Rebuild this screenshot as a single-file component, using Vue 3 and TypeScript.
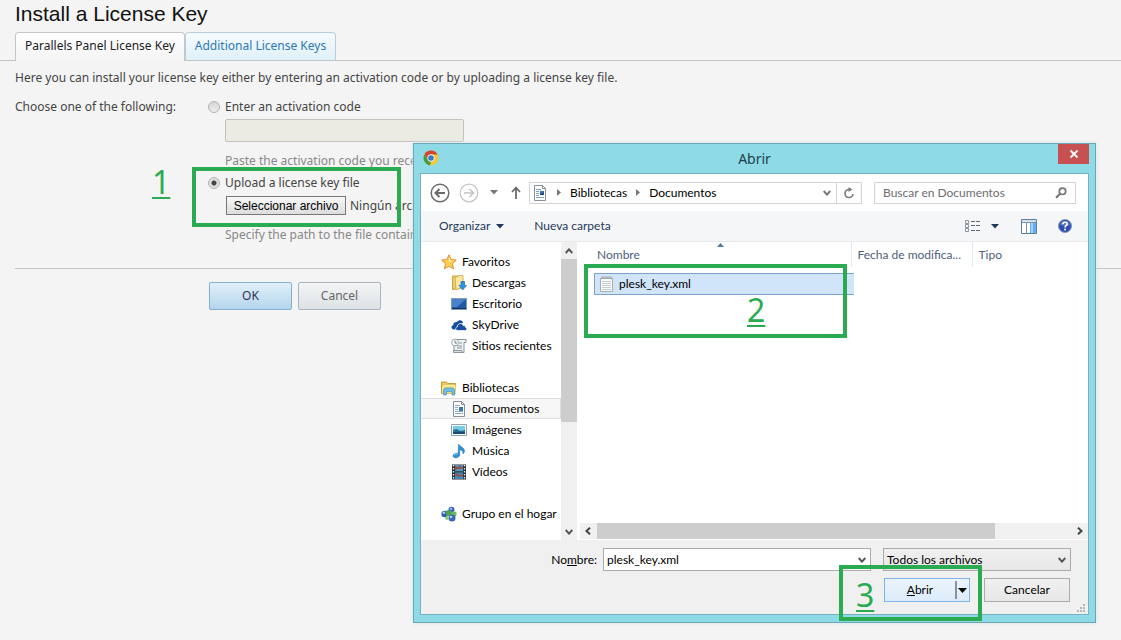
<script setup lang="ts">
import { ref } from 'vue'

interface TreeItem {
  label: string
  icon: string
  root?: boolean
  selected?: boolean
}

const groups: TreeItem[][] = [
  [
    { label: 'Favoritos', icon: 'star', root: true },
    { label: 'Descargas', icon: 'downloads' },
    { label: 'Escritorio', icon: 'desktop' },
    { label: 'SkyDrive', icon: 'cloud' },
    { label: 'Sitios recientes', icon: 'recent' },
  ],
  [
    { label: 'Bibliotecas', icon: 'libraries', root: true },
    { label: 'Documentos', icon: 'document', selected: true },
    { label: 'Imágenes', icon: 'picture' },
    { label: 'Música', icon: 'music' },
    { label: 'Vídeos', icon: 'video' },
  ],
  [{ label: 'Grupo en el hogar', icon: 'homegroup', root: true }],
]

const method = ref<string>('file')
const code = ref<string>('')
const query = ref<string>('')
const fileName = ref<string>('plesk_key.xml')
</script>

<template>
  <main class="page">
    <h1>Install a License Key</h1>
    <nav class="tabs">
      <a class="tab active" href="#panel">Parallels Panel License Key</a>
      <a class="tab" href="#additional">Additional License Keys</a>
    </nav>
    <p class="intro">Here you can install your license key either by entering an activation code or by uploading a license key file.</p>

    <form class="form" @submit.prevent>
      <div class="fields">
        <span class="prompt">Choose one of the following:</span>
        <div class="options">
          <label class="choice"><input v-model="method" type="radio" name="method" value="code" /><span>Enter an activation code</span></label>
          <input v-model="code" class="code" type="text" aria-label="Activation code" :disabled="method !== 'code'" />
          <p class="hint">Paste the activation code you received</p>
          <div class="upload">
            <label class="choice"><input v-model="method" type="radio" name="method" value="file" /><span>Upload a license key file</span></label>
            <div class="file">
              <button type="button">Seleccionar archivo</button>
              <span>Ningún archivo</span>
            </div>
            <div class="mark mark-one"><u>1</u></div>
          </div>
          <p class="hint last">Specify the path to the file containing</p>
        </div>
      </div>
      <div class="actions">
        <button class="ok" type="submit">OK</button>
        <button class="cancel" type="button">Cancel</button>
      </div>
    </form>

    <section class="dialog" role="dialog" aria-labelledby="dialog-title">
      <header class="titlebar">
        <svg class="chrome" viewBox="0 0 16 16" width="16" height="16">
          <circle cx="8" cy="8" r="7.5" fill="#f3c934" />
          <path d="M1.5 4.3A7.5 7.5 0 0 1 14.6 4.5H8L5 9.8z" fill="#d8402f" />
          <path d="M1.5 4.3L5 9.8L8 11.5L7 15.4A7.5 7.5 0 0 1 1.5 4.3z" fill="#3f9e49" />
          <circle cx="8" cy="8" r="3.7" fill="#f4f4ee" />
          <circle cx="8" cy="8" r="2.8" fill="#3c79cb" />
        </svg>
        <h2 id="dialog-title">Abrir</h2>
        <button class="close" type="button" aria-label="Cerrar">
          <svg viewBox="0 0 10 10" width="10" height="10"><path d="M1.5 1.5l7 7M8.5 1.5l-7 7" stroke="#fff" stroke-width="1.8" /></svg>
        </button>
      </header>

      <div class="client">
        <div class="address">
          <button class="icon-btn" type="button" aria-label="Atrás">
            <svg viewBox="0 0 20 20" width="20" height="20" fill="none" stroke="#6b6b6b"><circle cx="10" cy="10" r="8.8" stroke-width="1.5" /><path d="M15 10H6M9.5 6L5.5 10l4 4" stroke-width="2" /></svg>
          </button>
          <button class="icon-btn forward" type="button" aria-label="Adelante">
            <svg viewBox="0 0 20 20" width="20" height="20" fill="none" stroke="#c4c4c4"><circle cx="10" cy="10" r="8.8" stroke-width="1.2" /><path d="M5 10h9M10.5 6l4 4-4 4" stroke-width="1.6" /></svg>
          </button>
          <button class="icon-btn history" type="button" aria-label="Ubicaciones recientes">
            <svg viewBox="0 0 8 5" width="8" height="5"><path d="M0 0h8L4 4.6z" fill="#777" /></svg>
          </button>
          <button class="icon-btn up" type="button" aria-label="Subir">
            <svg viewBox="0 0 10 14" width="10" height="14" fill="none" stroke="#6b6b6b" stroke-width="1.8"><path d="M5 13V2M1 6l4-4.4L9 6" /></svg>
          </button>
          <div class="crumbs">
            <svg class="crumb-icon" viewBox="0 0 16 16" width="16" height="16">
              <path d="M2.5 .5h8l3 3v12h-11z" fill="#fff" stroke="#87909a" /><path d="M10.5.5v3h3" fill="none" stroke="#87909a" />
              <path d="M4 4.5h5M4 6.5h3M4 8.5h3M4 10.5h3M4 12.5h8" stroke="#7ba6c4" /><path d="M8 6h4v4H8z" fill="#3677b8" /><path d="M8 9L12 7.5V10H8z" fill="#1f4580" />
            </svg>
            <svg class="sep" viewBox="0 0 4 7" width="4" height="7"><path d="M0 0l4 3.5L0 7z" fill="#777" /></svg>
            <button type="button">Bibliotecas</button>
            <svg class="sep" viewBox="0 0 4 7" width="4" height="7"><path d="M0 0l4 3.5L0 7z" fill="#777" /></svg>
            <button type="button">Documentos</button>
            <button class="crumb-drop" type="button" aria-label="Ubicaciones anteriores">
              <svg viewBox="0 0 8 6" width="8" height="6" fill="none" stroke="#777" stroke-width="2"><path d="M.7 1L4 4.6 7.3 1" /></svg>
            </button>
            <button class="refresh" type="button" aria-label="Actualizar">
              <svg viewBox="0 0 12 12" width="12" height="12" fill="none" stroke="#7b7b7b" stroke-width="1.7"><path d="M6 2.5A4 4 0 1 0 10 7" /><path d="M5.5 0v5l4-2.5z" fill="#7b7b7b" stroke="none" /></svg>
            </button>
          </div>
          <label class="search">
            <input v-model="query" type="text" placeholder="Buscar en Documentos" aria-label="Buscar en Documentos" />
            <svg viewBox="0 0 12 12" width="12" height="12" fill="none" stroke="#777"><circle cx="7.5" cy="4.3" r="3.2" stroke-width="1.7" /><path d="M5 6.8L1 10.8" stroke-width="2.2" /></svg>
          </label>
        </div>

        <div class="commands">
          <button type="button">Organizar <svg viewBox="0 0 8 5" width="8" height="5"><path d="M0 0h8L4 4.6z" fill="#1e395b" /></svg></button>
          <button class="new-folder" type="button">Nueva carpeta</button>
          <button class="view" type="button" aria-label="Cambiar la vista">
            <svg viewBox="0 0 16 14" width="16" height="14" fill="none" stroke="#8c949d"><path d="M.5 1.5h3v3h-3zM.5 5.5h3v3h-3zM.5 9.5h3v3h-3z" /><path d="M6 2.5h4M11 2.5h4M6 6.5h4M11 6.5h4M6 11.5h4M11 11.5h4" stroke="#5f6870" /></svg>
            <svg viewBox="0 0 8 5" width="8" height="5"><path d="M0 0h8L4 4.6z" fill="#1e395b" /></svg>
          </button>
          <button class="preview" type="button" aria-label="Panel de vista previa">
            <svg viewBox="0 0 16 15" width="16" height="15"><path d="M.5.5h15v14H.5z" fill="#fff" stroke="#5b7f9f" /><path d="M1 1h14v2H1z" fill="#d5e3ee" /><path d="M1 3.5h14M5.5 3v11" stroke="#7c94a9" /><path d="M9 4h6v10H9z" fill="#63aef0" /><path d="M10 4h2v10h-2z" fill="#a2d2fb" /></svg>
          </button>
          <button class="help" type="button" aria-label="Ayuda">
            <svg viewBox="0 0 14 14" width="14" height="14"><circle cx="7" cy="7" r="6.5" fill="#2d4fb4" stroke="#8796bd" /><path d="M2 6a5 4.3 0 0 1 10 0Q7 8 2 6z" fill="#5674c9" /><path d="M4.8 5.2C4.8 2.5 9.3 2.6 9.2 5.1C9.1 6.6 7 6.5 7 8.6" fill="none" stroke="#fff" stroke-width="1.6" /><circle cx="7" cy="10.6" r="1" fill="#fff" /></svg>
          </button>
        </div>

        <div class="body">
          <div class="tree-pane">
            <div class="tree">
              <ul v-for="(group, g) in groups" :key="g">
                <li v-for="item in group" :key="item.label" :class="{ root: item.root, selected: item.selected }">
                  <svg viewBox="0 0 16 16" width="16" height="16">
                    <g v-if="item.icon === 'star'"><path d="M8 .8l2.1 4.8 5.2.5-3.9 3.5 1.1 5.2L8 12.1l-4.6 2.7 1.2-5.2L.7 6.1l5.2-.5z" fill="#ffd050" stroke="#e18b31" /><path d="M8 2.5l1.4 4 3.8.4-5.2 1z" fill="#fff2ae" /></g>
                    <g v-else-if="item.icon === 'downloads'"><path d="M1.5 1h7l1 1.5v11l-8 1z" fill="#f0cf68" stroke="#c8a449" /><path d="M4 2.5l5-2h3v11l-7 3.5z" fill="#fae99f" stroke="#d1b15b" /><path d="M10 6.5h3.5v4h2L11.7 15 8 10.5h2z" fill="#2d93df" stroke="#1b6fb9" stroke-width=".7" /></g>
                    <g v-else-if="item.icon === 'desktop'"><path d="M.5 2.5h15v11H.5z" fill="#2359a9" stroke="#7d9bbb" /><path d="M1 3h14L6 11H1z" fill="#4883c9" /><path d="M1 12.5h14" stroke="#152f59" /></g>
                    <g v-else-if="item.icon === 'cloud'"><path d="M3 12.5C0 12.5-.5 8.8 2.2 8.2C2 5 5.5 4.5 6 5.3C7.7 2 12 3.3 12 6L7 7.5 4.5 12.5z" fill="#174da2" /><path d="M7 13.5C4.1 13.5 4 10.2 6.4 9.8C6.4 6 11.4 5.4 12.4 8.8C14.2 8.5 14.8 9.4 14.5 10.4C16.6 10.8 16 13.5 14 13.5z" fill="#174da2" stroke="#fff" stroke-width=".7" /></g>
                    <g v-else-if="item.icon === 'recent'"><path d="M5 1.5h10v3h-2v10H3v-9h2z" fill="#eff3f4" stroke="#87939c" /><path d="M2.5 12.5H11v2H2.5zM6 8h5M6 10h5M8 5h3" fill="#dce3e6" stroke="#8b989f" /><circle cx="4" cy="4.5" r="3.4" fill="#f8fbfc" stroke="#9aa7ae" /><path d="M4 2.5V5h2" fill="none" stroke="#6f7e89" /></g>
                    <g v-else-if="item.icon === 'libraries'"><path d="M.5 2h5l1 1.5h8v10H.5z" fill="#ecc35b" stroke="#c69d41" /><path d="M2.5 5h12v8h-12z" fill="#fff2a9" /><path d="M1 6h12l2 7.5H1z" fill="#f8df80" /><path d="M2.5 15V10.5Q2.5 8 5 8h6q2.5 0 2.5 2.5V15H11v-3.5H5.5V15z" fill="#71bce9" stroke="#4594bf" stroke-width=".7" /></g>
                    <g v-else-if="item.icon === 'document'"><path d="M2.5.5h8l3 3v12h-11z" fill="#fff" stroke="#87909a" /><path d="M10.5.5v3h3" fill="none" stroke="#87909a" /><path d="M4 4.5h5M4 6.5h3M4 8.5h3M4 10.5h8M4 12.5h8" stroke="#8ca8bb" /><path d="M8 6h4v4H8z" fill="#3677b8" /></g>
                    <g v-else-if="item.icon === 'picture'"><path d="M.5 2.5h15v11H.5z" fill="#fff" stroke="#8fa2ae" /><path d="M2 4h12v8H2z" fill="#79c9eb" /><path d="M2 8q4-2 6 .5 3 .7 6-.8V12H2z" fill="#297b97" /><path d="M2 10q6-1 12 0v2H2z" fill="#164e79" /></g>
                    <g v-else-if="item.icon === 'music'"><path d="M7.5 1C9 4 13.5 4.5 13.5 7.7q0 1.8-1.4 3.3C12.7 7.8 9.5 7 8.7 6.8v5.4C8.6 14.8 2 16.2 2 12.8 2 10.7 5 9.6 7.1 10.4z" fill="#2f91d5" stroke="#1771b1" stroke-width=".5" /><path d="M3 12q1-1.5 3.5-1" fill="none" stroke="#94d9fa" /></g>
                    <g v-else-if="item.icon === 'video'"><path d="M1 .5h14v15H1z" fill="#242d32" /><path d="M4 1h8v6.3H4z" fill="#4c9bc9" /><path d="M4 8.4h8V15H4z" fill="#3d8bc0" /><path d="M4 2l3 1 2-2 3 3v1H9L7 5 4 6zM4 10l2-1 3 2 3-1v2l-4 1-4-2z" fill="#92554b" /><path d="M2.5 1v14M13.5 1v14" stroke="#e5edf0" stroke-width="1.4" stroke-dasharray="1.5 1.5" /></g>
                    <g v-else><circle cx="10.5" cy="3.8" r="3" fill="#3565ba" /><circle cx="3.6" cy="8" r="3.2" fill="#2e5db2" /><circle cx="12.8" cy="8" r="2.8" fill="#70b85b" /><circle cx="7.5" cy="7" r="3" fill="#4aa555" /><circle cx="11" cy="12" r="3.5" fill="#3a66be" /><circle cx="6" cy="12" r="2" fill="#8ccb7c" /><circle cx="2.8" cy="6.8" r="1.2" fill="#b9d5f2" /><circle cx="10" cy="2.8" r="1.1" fill="#b9d5f2" /><circle cx="10" cy="11" r="1.3" fill="#b3ccf2" /></g>
                  </svg>
                  <span>{{ item.label }}</span>
                </li>
              </ul>
            </div>
            <div class="vscroll">
              <svg viewBox="0 0 8 6" width="8" height="6" fill="none" stroke="#555" stroke-width="2"><path d="M.7 5L4 1.4 7.3 5" /></svg>
              <div class="thumb"></div>
              <svg viewBox="0 0 8 6" width="8" height="6" fill="none" stroke="#555" stroke-width="2"><path d="M.7 1L4 4.6 7.3 1" /></svg>
            </div>
          </div>

          <div class="list-pane">
            <table>
              <thead>
                <tr>
                  <th class="name">Nombre<svg viewBox="0 0 7 4" width="7" height="4"><path d="M0 4L3.5 0 7 4z" fill="#557ba0" /></svg></th>
                  <th class="date">Fecha de modifica...</th>
                  <th>Tipo</th>
                </tr>
              </thead>
              <tbody>
                <tr>
                  <td class="file-cell">
                    <div class="file-row">
                      <svg viewBox="0 0 16 16" width="16" height="16"><path d="M1.5 2.5h12v13h-12z" fill="#fafcfc" stroke="#a5adb1" /><path d="M3 5.5h9M3 7.5h9M3 9.5h9M3 11.5h9M3 13.5h9" stroke="#c3ccd0" /><path d="M2 2.5l1-2 1 2 1-2 1 2 1-2 1 2 1-2 1 2 1-2 1 2 1-2" fill="none" stroke="#9da7ad" stroke-width=".7" /></svg>
                      <span>plesk_key.xml</span>
                    </div>
                  </td>
                  <td></td>
                  <td></td>
                </tr>
              </tbody>
            </table>
            <div class="hscroll">
              <svg viewBox="0 0 6 8" width="6" height="8" fill="none" stroke="#444" stroke-width="2"><path d="M5 .7L1.4 4 5 7.3" /></svg>
              <div class="track"><div class="thumb"></div></div>
              <svg viewBox="0 0 6 8" width="6" height="8" fill="none" stroke="#444" stroke-width="2"><path d="M1 .7L4.6 4 1 7.3" /></svg>
            </div>
            <div class="mark mark-two"><u>2</u></div>
          </div>
        </div>

        <footer class="footer">
          <div class="line">
            <label for="file-name">No<u>m</u>bre:</label>
            <div class="combo">
              <input id="file-name" v-model="fileName" type="text" />
              <svg viewBox="0 0 8 6" width="8" height="6" fill="none" stroke="#555" stroke-width="2"><path d="M.7 1L4 4.6 7.3 1" /></svg>
            </div>
            <div class="combo filter">
              <select aria-label="Tipo de archivo"><option>Todos los archivos</option></select>
              <svg viewBox="0 0 8 6" width="8" height="6" fill="none" stroke="#555" stroke-width="2"><path d="M.7 1L4 4.6 7.3 1" /></svg>
            </div>
          </div>
          <div class="line buttons">
            <button class="open" type="button">
              <span><u>A</u>brir</span>
              <svg viewBox="0 0 12 18" width="12" height="18"><path d="M1 0v18" stroke="#333" /><path d="M3 7h9l-4.500 5z" fill="#000" /></svg>
            </button>
            <button class="dismiss" type="button">Cancelar</button>
            <div class="mark mark-three"><u>3</u></div>
          </div>
          <svg class="grip" viewBox="0 0 8 8" width="8" height="8" fill="#b5b5b5"><path d="M6 0h2v2H6zM3 3h2v2H3zM6 3h2v2H6zM0 6h2v2H0zM3 6h2v2H3zM6 6h2v2H6z" /></svg>
        </footer>
      </div>
    </section>
  </main>
</template>

<style>
body {
  margin: 0;
  background: #f4f4f4;
}
</style>

<style scoped>
* {
  box-sizing: border-box;
}
.page {
  position: relative;
  min-height: 100vh;
  overflow: hidden;
  color: #444;
  font: 12px/16px "Noto Sans", sans-serif;
}
h1, h2, p, ul {
  margin: 0;
  padding: 0;
  font-weight: normal;
}
button, input, select {
  font: inherit;
  color: inherit;
  margin: 0;
}
button {
  padding: 0;
  border: 0;
  background: none;
}
svg {
  flex: none;
  display: block;
}
h1 {
  padding: 2px 15px 0;
  color: #111;
  font: 21px/24px "Liberation Sans", Arial, sans-serif;
}
.tabs {
  display: flex;
  height: 29px;
  margin-top: 6px;
  padding-left: 15px;
  border-bottom: 1px solid #c3c7ca;
}
.tab {
  height: 28px;
  padding: 0 9px;
  border: 1px solid #b5cddc;
  border-bottom: 0;
  border-radius: 4px 4px 0 0;
  background: linear-gradient(#f6fbfe, #dff0f8);
  color: #2e78b8;
  line-height: 26px;
  text-decoration: none;
}
.tab.active {
  height: 29px;
  border-color: #c3c7ca;
  background: linear-gradient(#fff, #f4f4f4);
  color: #222;
}
.intro {
  padding: 9px 15px 0;
}
.fields {
  display: flex;
  padding: 13px 15px 0;
}
.prompt {
  flex: 0 0 193px;
}
.choice {
  display: flex;
  align-items: center;
  gap: 5px;
}
.choice input {
  appearance: none;
  width: 12px;
  height: 12px;
  border: 1px solid #b4b4b4;
  border-radius: 50%;
  background: linear-gradient(#d6d6d6, #ececec);
}
.choice input:checked {
  background: radial-gradient(circle, #444 0 2px, #ddd 3px);
}
.code {
  display: block;
  width: 239px;
  height: 23px;
  margin: 4px 0 0 17px;
  border: 1px solid #c3c3bb;
  border-radius: 2px;
  background: #ebebe4;
}
.hint {
  margin: 11px 0 0 17px;
  color: #888;
}
.upload {
  position: relative;
  padding-top: 6px;
}
.file {
  display: flex;
  align-items: center;
  gap: 4px;
  margin: 5px 0 0 18px;
  white-space: nowrap;
}
.file button {
  width: 120px;
  height: 19px;
  border: 1px solid #777;
  background: linear-gradient(#f8f8f8, #ddd);
  color: #000;
  font: 12px/16px "Liberation Sans", Arial, sans-serif;
}
.hint.last {
  margin-top: 12px;
}
.actions {
  display: flex;
  gap: 6px;
  margin: 25px 0 0 15px;
  padding: 13px 0 0 194px;
  border-top: 1px solid #c3c3c3;
}
.actions button {
  width: 83px;
  height: 28px;
  border: 1px solid #a9b6be;
  border-radius: 2px;
  background: linear-gradient(#f3f5f6, #dce2e5);
  color: #666;
}
.actions .ok {
  border-color: #86aed0;
  background: linear-gradient(#e1f0fa, #b4d5ec);
  color: #335;
}
.mark {
  position: absolute;
  border: 4px solid #2bab51;
  color: #2bab51;
  font: 32px/36px "Noto Sans", sans-serif;
  pointer-events: none;
}
.mark u {
  position: absolute;
  text-decoration-thickness: 2px;
  text-underline-offset: 3px;
}
.mark-one {
  left: -16px;
  top: -2px;
  width: 209px;
  height: 60px;
}
.mark-one u {
  left: -44px;
  top: -7px;
}
.dialog {
  position: absolute;
  left: 413px;
  right: 25px;
  top: 143px;
  padding: 0 6px 7px;
  border: 1px solid #6aa7b4;
  background: #8edbe7;
  color: #000;
  box-shadow: 0 0 4px #d3e3e6;
}
.titlebar {
  display: flex;
  align-items: flex-start;
  height: 29px;
}
.chrome {
  margin: 6px 0 0 3px;
}
h2 {
  flex: 1;
  padding-left: 12px;
  color: #22404a;
  font-size: 14px;
  line-height: 29px;
  text-align: center;
}
.close {
  display: grid;
  place-items: center;
  width: 31px;
  height: 20px;
  background: #c75050;
}
.client {
  border: 1px solid #77b1bd;
  background: #fff;
  font: 12px/16px Lato, "Open Sans", sans-serif;
}
.address {
  display: flex;
  align-items: center;
  height: 37px;
  padding: 0 12px 0 9px;
}
.forward {
  margin-left: 9px;
}
.history {
  margin-left: 11px;
}
.up {
  margin: 0 8px 0 13px;
}
.crumbs {
  display: flex;
  flex: 1;
  align-items: center;
  height: 22px;
  border: 1px solid #d4d4d4;
}
.crumb-icon {
  margin-left: 2px;
}
.sep {
  margin: 0 9px;
}
.crumb-drop {
  margin-left: auto;
  padding-right: 5px;
}
.refresh {
  display: grid;
  place-items: center;
  width: 25px;
  height: 20px;
  border-left: 1px solid #d4d4d4;
}
.search {
  display: flex;
  flex: 0 0 202px;
  align-items: center;
  height: 22px;
  margin-left: 12px;
  padding: 0 8px;
  border: 1px solid #d4d4d4;
}
.search input {
  flex: 1;
  min-width: 0;
  padding: 0;
  border: 0;
  outline: 0;
}
.search input::placeholder {
  color: #6d6d6d;
  opacity: 1;
}
.commands {
  display: flex;
  align-items: center;
  height: 31px;
  padding: 0 16px 0 18px;
  border-bottom: 1px solid #e6e9ed;
  background: #f5f6f7;
  color: #1e395b;
}
.commands button {
  display: flex;
  align-items: center;
  gap: 6px;
}
.commands .new-folder {
  margin-left: 30px;
}
.commands .view {
  gap: 10px;
  margin-left: auto;
}
.commands .preview {
  margin-left: 22px;
}
.commands .help {
  margin-left: 21px;
}
.body {
  display: flex;
  height: 298px;
}
.tree-pane {
  display: flex;
  flex: 0 0 156px;
}
.tree {
  flex: 1;
  min-width: 0;
  padding-top: 9px;
}
.tree ul {
  margin-bottom: 21px;
  list-style: none;
}
.tree li {
  display: flex;
  align-items: center;
  gap: 5px;
  height: 21px;
  padding-left: 30px;
  border: 1px solid transparent;
  border-left: 0;
  white-space: nowrap;
}
.tree .root {
  padding-left: 20px;
}
.tree .selected {
  border-color: #dedede;
  background: #f7f7f7;
}
.vscroll {
  display: flex;
  flex: 0 0 16px;
  flex-direction: column;
  align-items: center;
  padding: 6px 0 5px;
  background: #f0f0f0;
}
.vscroll .thumb {
  width: 16px;
  height: 163px;
  margin: 5px 0 auto;
  background: #cdcdcd;
}
.list-pane {
  position: relative;
  display: flex;
  flex: 1;
  flex-direction: column;
  min-width: 0;
  margin-left: 3px;
}
table {
  width: 100%;
  border-collapse: collapse;
  table-layout: fixed;
}
th {
  position: relative;
  height: 25px;
  padding: 0 6px;
  color: #4c607a;
  font-weight: normal;
  text-align: left;
  white-space: nowrap;
}
th + th {
  border-left: 1px solid #e2e8ef;
}
.name {
  width: 271px;
  padding-left: 17px;
}
.name svg {
  position: absolute;
  left: 137px;
  top: 1px;
}
.date {
  width: 121px;
}
td {
  padding: 6px 0 0;
}
.file-row {
  display: flex;
  align-items: center;
  gap: 4px;
  width: 260px;
  height: 22px;
  margin-left: 14px;
  padding-left: 4px;
  border: 1px solid #7da2ce;
  border-right: 0;
  background: #d0e4fa;
}
.hscroll {
  display: flex;
  align-items: center;
  gap: 6px;
  height: 16px;
  margin: auto 0 1px;
  padding: 0 5px;
  background: #f0f0f0;
}
.hscroll .track {
  flex: 1;
}
.hscroll .thumb {
  width: 84%;
  height: 16px;
  background: #cdcdcd;
}
.mark-two {
  left: 4px;
  top: 22px;
  width: 263px;
  height: 74px;
}
.mark-two u {
  left: 159px;
  top: 24px;
}
.footer {
  position: relative;
  padding: 8px 17px 12px 20px;
  background: #f0f0f0;
}
.line {
  display: flex;
  align-items: center;
  justify-content: flex-end;
}
.combo {
  display: flex;
  flex: 0 0 268px;
  align-items: center;
  height: 23px;
  margin-left: 6px;
  border: 1px solid #ababab;
  background: #fff;
}
.combo input, .combo select {
  flex: 1;
  min-width: 0;
  padding: 0 0 0 3px;
  border: 0;
  outline: 0;
  appearance: none;
  background: none;
}
.combo svg {
  margin-right: 4px;
}
.filter {
  flex-basis: 188px;
  margin-left: 12px;
  background: linear-gradient(#f0f0f0, #e7e7e7);
}
.buttons {
  position: relative;
  gap: 14px;
  margin-top: 7px;
  padding-right: 1px;
}
.buttons button {
  width: 86px;
  height: 24px;
  border: 1px solid #acacac;
  background: linear-gradient(#f0f0f0, #e7e7e7);
}
.buttons .open {
  display: flex;
  align-items: center;
  border-color: #7eb4ea;
  background: linear-gradient(#ecf4fc, #dcecfc);
}
.open span {
  flex: 1;
}
.open svg {
  margin-right: 2px;
}
.mark-three {
  right: 89px;
  top: -13px;
  width: 143px;
  height: 56px;
}
.mark-three u {
  left: 13px;
  top: 8px;
}
.grip {
  position: absolute;
  right: 3px;
  bottom: 2px;
}
</style>
